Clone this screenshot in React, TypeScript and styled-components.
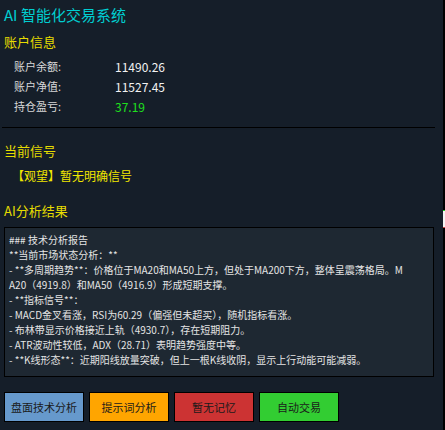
import styled, { createGlobalStyle } from "styled-components";

const GlobalStyle = createGlobalStyle`
    html, body {
        margin: 0;
        padding: 0;
        background: #151e29;
    }
    body {
        font-family: "Noto Sans CJK SC", "Noto Sans", sans-serif;
    }
`;

const Window = styled.div`
    display: flex;
    width: 445px;
    height: 430px;
    overflow: hidden;
`;

const Panel = styled.div`
    display: flex;
    flex-direction: column;
    width: 443px;
    padding: 4px 0 0 4px;
    box-sizing: border-box;
    background: #151e29;
`;

const EdgeStrip = styled.div`
    position: relative;
    width: 2px;
    background: #000;
`;

const EdgeThumb = styled.div`
    position: absolute;
    left: 0;
    top: 210px;
    width: 2px;
    height: 16px;
    background: #f4f4f4;
    border-top: 1px solid #22cc22;
    border-bottom: 1px solid #cc4444;
`;

const Title = styled.h1`
    margin: 0;
    font-size: 15px;
    font-weight: 400;
    line-height: 22px;
    color: #00ced1;
`;

const SectionTitle = styled.h2<{ $gap: number }>`
    margin: ${(p) => p.$gap}px 0 0;
    font-size: 13px;
    font-weight: 400;
    line-height: 20px;
    color: #e6dc00;
`;

const InfoList = styled.div`
    display: flex;
    flex-direction: column;
    margin-top: 4px;
    padding-left: 10px;
`;

const InfoRow = styled.div`
    display: flex;
    height: 20px;
    align-items: center;
`;

const InfoLabel = styled.span`
    width: 101px;
    font-size: 11px;
    color: #d8d8d8;
`;

const InfoValue = styled.span<{ $color?: string }>`
    font-size: 12px;
    color: ${(p) => p.$color || "#f2f2f2"};
`;

const Divider = styled.div`
    margin: 11px 0 0 -2px;
    width: 433px;
    height: 1px;
    background: #000;
`;

const Signal = styled.div`
    margin-top: 5px;
    padding-left: 8px;
    font-size: 12px;
    line-height: 20px;
    color: #f0e600;
`;

const Report = styled.div`
    margin-top: 6px;
    width: 430px;
    height: 150px;
    box-sizing: border-box;
    padding: 4px 26px 0 4px;
    background: #1e2832;
    border: 1px solid #000;
    font-size: 10px;
    line-height: 15px;
    color: #e4e4e4;
    word-break: break-all;
`;

const ReportLine = styled.div``;

const ButtonBar = styled.div`
    display: flex;
    gap: 5px;
    margin-top: 15px;
`;

const ActionButton = styled.button<{ $bg: string }>`
    width: 80px;
    height: 30px;
    padding: 0;
    border: 1px solid #000;
    background: ${(p) => p.$bg};
    color: #1a1a1a;
    font-family: "Noto Sans CJK SC", sans-serif;
    font-size: 11px;
    cursor: pointer;
`;

const account = [
    { label: "账户余额:", value: "11490.26" },
    { label: "账户净值:", value: "11527.45" },
    { label: "持仓盈亏:", value: "37.19", color: "#1ee01e" },
];

const report = [
    "### 技术分析报告",
    "**当前市场状态分析：**",
    "- **多周期趋势**：价格位于MA20和MA50上方，但处于MA200下方，整体呈震荡格局。MA20（4919.8）和MA50（4916.9）形成短期支撑。",
    "- **指标信号**：",
    "- MACD金叉看涨，RSI为60.29（偏强但未超买），随机指标看涨。",
    "- 布林带显示价格接近上轨（4930.7），存在短期阻力。",
    "- ATR波动性较低，ADX（28.71）表明趋势强度中等。",
    "- **K线形态**：近期阳线放量突破，但上一根K线收阴，显示上行动能可能减弱。",
];

const buttons = [
    { text: "盘面技术分析", bg: "#6699cc" },
    { text: "提示词分析", bg: "#ffa500" },
    { text: "暂无记忆", bg: "#cc3333" },
    { text: "自动交易", bg: "#32cd32" },
];

export default function App() {
    return (
        <>
            <GlobalStyle/>
            <Window>
                <Panel>
                    <Title>AI 智能化交易系统</Title>
                    <SectionTitle $gap={6}>账户信息</SectionTitle>
                    <InfoList>
                        {account.map((row) => (
                            <InfoRow key={row.label}>
                                <InfoLabel>{row.label}</InfoLabel>
                                <InfoValue $color={row.color}>{row.value}</InfoValue>
                            </InfoRow>
                        ))}
                    </InfoList>
                    <Divider/>
                    <SectionTitle $gap={13}>当前信号</SectionTitle>
                    <Signal>【观望】暂无明确信号</Signal>
                    <SectionTitle $gap={15}>AI分析结果</SectionTitle>
                    <Report>
                        {report.map((line, i) => (
                            <ReportLine key={i}>{line}</ReportLine>
                        ))}
                    </Report>
                    <ButtonBar>
                        {buttons.map((b) => (
                            <ActionButton key={b.text} $bg={b.bg}>{b.text}</ActionButton>
                        ))}
                    </ButtonBar>
                </Panel>
                <EdgeStrip>
                    <EdgeThumb/>
                </EdgeStrip>
            </Window>
        </>
    );
}
